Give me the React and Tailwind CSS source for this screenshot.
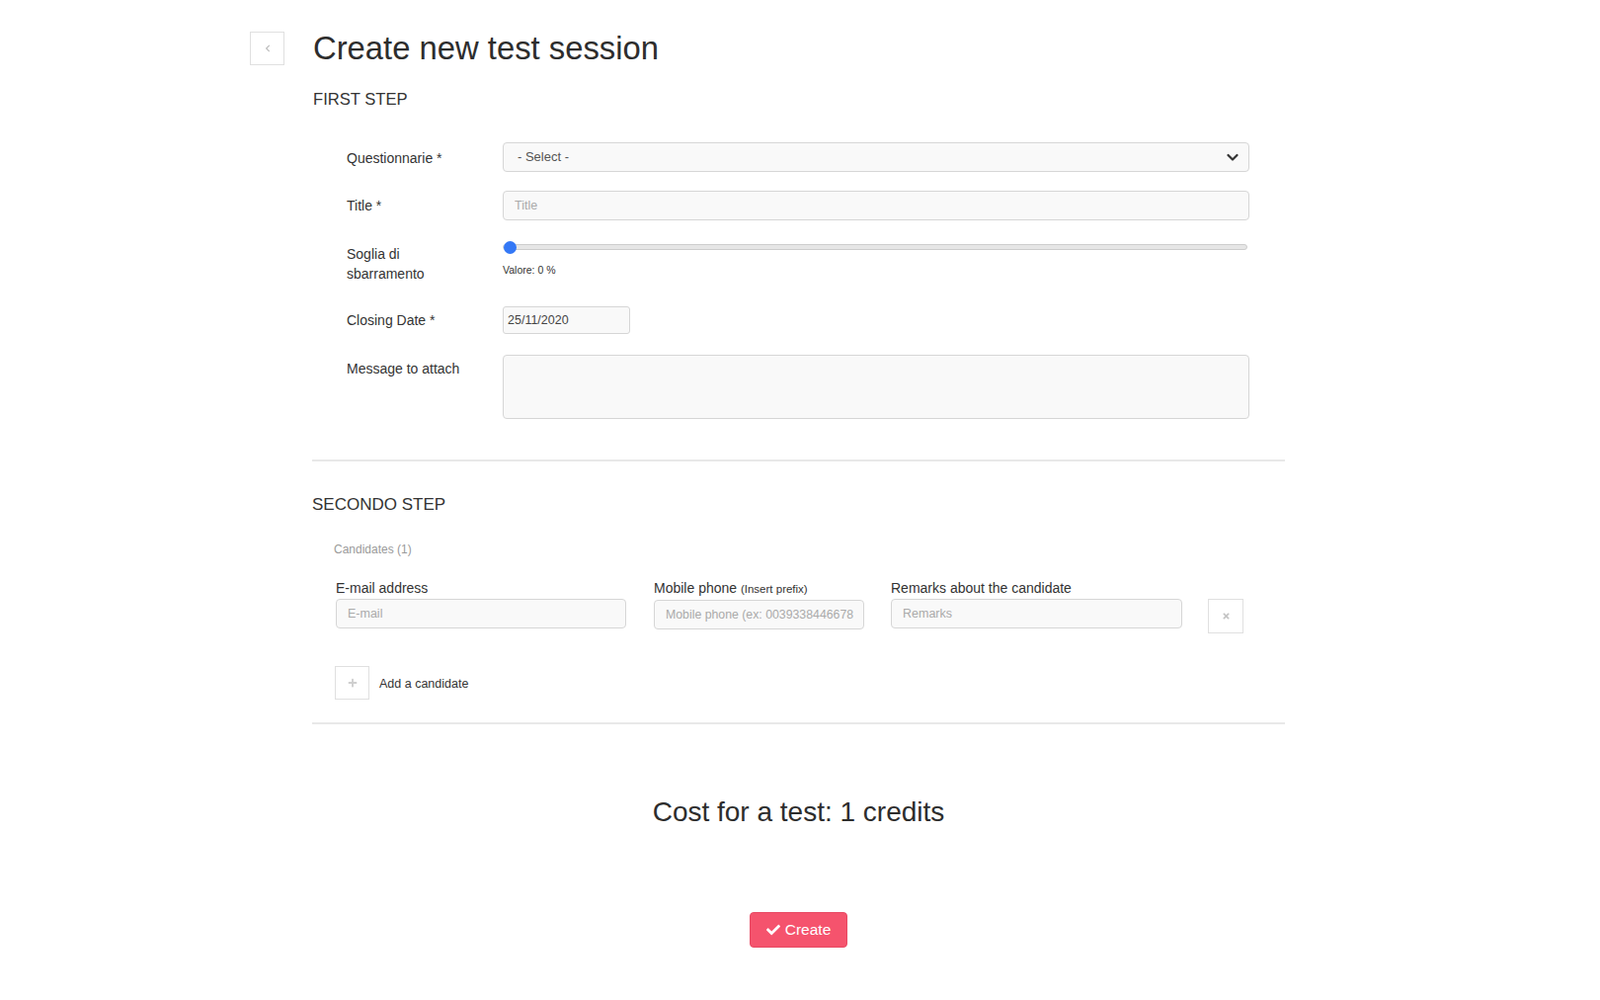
import React from "react";
import { FaChevronLeft, FaTimes, FaPlus, FaCheck } from "react-icons/fa";

function Label({ children, className = "" }) {
  return (
    <div className={"w-[158px] shrink-0 text-[14px] leading-[20px] text-[#333] " + className}>
      {children}
    </div>
  );
}

export default function App() {
  return (
    <div className="min-h-screen bg-white font-['Liberation_Sans',Arial,sans-serif] text-[#333]">
      <div className="flex pl-[253px] pt-[32px]">
        <button className="w-[35px] h-[34px] shrink-0 border border-[#e0e0e0] bg-white flex items-center justify-center text-[#bdbdbd]">
          <FaChevronLeft size={8} />
        </button>
        <div className="ml-[28px] w-[985px]">
          <h1 className="text-[32.8px] leading-[36px] -mt-[1px] ml-px text-[#2d2d2d]">Create new test session</h1>
          <h2 className="mt-[24px] text-[16.6px] leading-[20px] ml-px text-[#333]">FIRST STEP</h2>

          <div className="pl-[35px]">
            {/* Row 1 */}
            <div className="flex mt-[33px]">
              <Label className="pt-[6px]">Questionnarie *</Label>
              <div className="relative w-[756px] h-[30px] border border-[#d6d6d6] rounded-[4px] bg-[#f9f9f9] flex items-center pl-[14px] text-[13px] text-[#555]">
                - Select -
                <svg className="absolute right-[10px] top-[10px]" width="12" height="9" viewBox="0 0 12 9">
                  <path d="M1.5 2 L6 6.5 L10.5 2" fill="none" stroke="#333" strokeWidth="2.2" strokeLinecap="round" strokeLinejoin="round" />
                </svg>
              </div>
            </div>

            {/* Row 2 */}
            <div className="flex mt-[19px]">
              <Label className="pt-[5px]">Title *</Label>
              <input
                placeholder="Title"
                className="w-[756px] h-[30px] border border-[#d6d6d6] rounded-[4px] bg-[#f9f9f9] pl-[11px] text-[12.5px] placeholder:text-[#aaa] outline-none"
              />
            </div>

            {/* Row 3 */}
            <div className="flex mt-[19px]">
              <Label className="pt-[5px]">
                Soglia di
                <br />
                sbarramento
              </Label>
              <div className="w-[756px]">
                <div className="relative h-[16px] flex items-center">
                  <div className="w-[754px] h-[6px] rounded-full bg-[#e6e6e6] border border-[#cdcdcd]"></div>
                  <div className="absolute left-[1px] top-[1.5px] w-[13px] h-[13px] rounded-full bg-[#3478f6]"></div>
                </div>
                <div className="mt-[8px] text-[10.5px] leading-[14px] text-[#333]">Valore: 0 %</div>
              </div>
            </div>

            {/* Row 4 */}
            <div className="flex mt-[23px]">
              <Label className="pt-[4px]">Closing Date *</Label>
              <input
                defaultValue="25/11/2020"
                className="w-[129px] h-[28px] border border-[#d6d6d6] rounded-[3px] bg-[#f9f9f9] pl-[4px] text-[12.5px] text-[#444] outline-none"
              />
            </div>

            {/* Row 5 */}
            <div className="flex mt-[21px]">
              <Label className="pt-[4px]">Message to attach</Label>
              <textarea className="w-[756px] h-[65px] border border-[#d6d6d6] rounded-[4px] bg-[#f9f9f9] resize-none outline-none"></textarea>
            </div>
          </div>

          <div className="mt-[41px] h-[2px] bg-[#e8e8e8]"></div>

          <h2 className="mt-[34px] text-[17px] leading-[20px] text-[#333]">SECONDO STEP</h2>

          <div className="mt-[27px] ml-[22px] text-[12px] leading-[16px] text-[#9a9a9a]">Candidates (1)</div>

          <div className="ml-[24px] mt-[22px] flex items-start">
            <div className="w-[294px]">
              <div className="text-[14px] leading-[18px] text-[#333]">E-mail address</div>
              <input
                placeholder="E-mail"
                className="mt-[2px] w-[294px] h-[30px] border border-[#d6d6d6] rounded-[4px] bg-[#f9f9f9] pl-[11px] text-[12.5px] placeholder:text-[#aaa] outline-none"
              />
            </div>
            <div className="w-[213px] ml-[28px]">
              <div className="text-[14px] leading-[18px] text-[#333] whitespace-nowrap">
                Mobile phone <span className="text-[11.5px]">(Insert prefix)</span>
              </div>
              <input
                placeholder="Mobile phone (ex: 0039338446678"
                className="mt-[2px] w-[213px] h-[30px] border border-[#d6d6d6] rounded-[4px] bg-[#f9f9f9] pl-[11px] pr-[4px] text-[12.3px] placeholder:text-[#aaa] outline-none"
              />
            </div>
            <div className="w-[295px] ml-[27px]">
              <div className="text-[14px] leading-[18px] text-[#333]">Remarks about the candidate</div>
              <input
                placeholder="Remarks"
                className="mt-[2px] w-[295px] h-[30px] border border-[#d6d6d6] rounded-[4px] bg-[#f9f9f9] pl-[11px] text-[12.5px] placeholder:text-[#aaa] outline-none"
              />
            </div>
            <button className="ml-[26px] mt-[20px] w-[36px] h-[35px] border border-[#e0e0e0] bg-white flex items-center justify-center text-[#c4c4c4]">
              <FaTimes size={9} />
            </button>
          </div>

          <div className="ml-[23px] mt-[33px] flex items-center">
            <button className="w-[35px] h-[34px] border border-[#e0e0e0] bg-white flex items-center justify-center text-[#cfcfcf]">
              <FaPlus size={10} />
            </button>
            <span className="ml-[10px] mt-[3px] text-[12.5px] text-[#333]">Add a candidate</span>
          </div>

          <div className="mt-[23px] h-[2px] bg-[#e8e8e8]"></div>

          <div className="mt-[73px] text-center text-[28px] leading-[32px] text-[#2d2d2d]">Cost for a test: 1 credits</div>

          <div className="mt-[85px] flex justify-center">
            <button className="w-[99px] h-[36px] rounded-[4px] bg-[#f5536d] border border-[#e84862] text-white flex items-center justify-center gap-[5px] text-[15.5px]">
              <FaCheck size={14} />
              Create
            </button>
          </div>
        </div>
      </div>
    </div>
  );
}
